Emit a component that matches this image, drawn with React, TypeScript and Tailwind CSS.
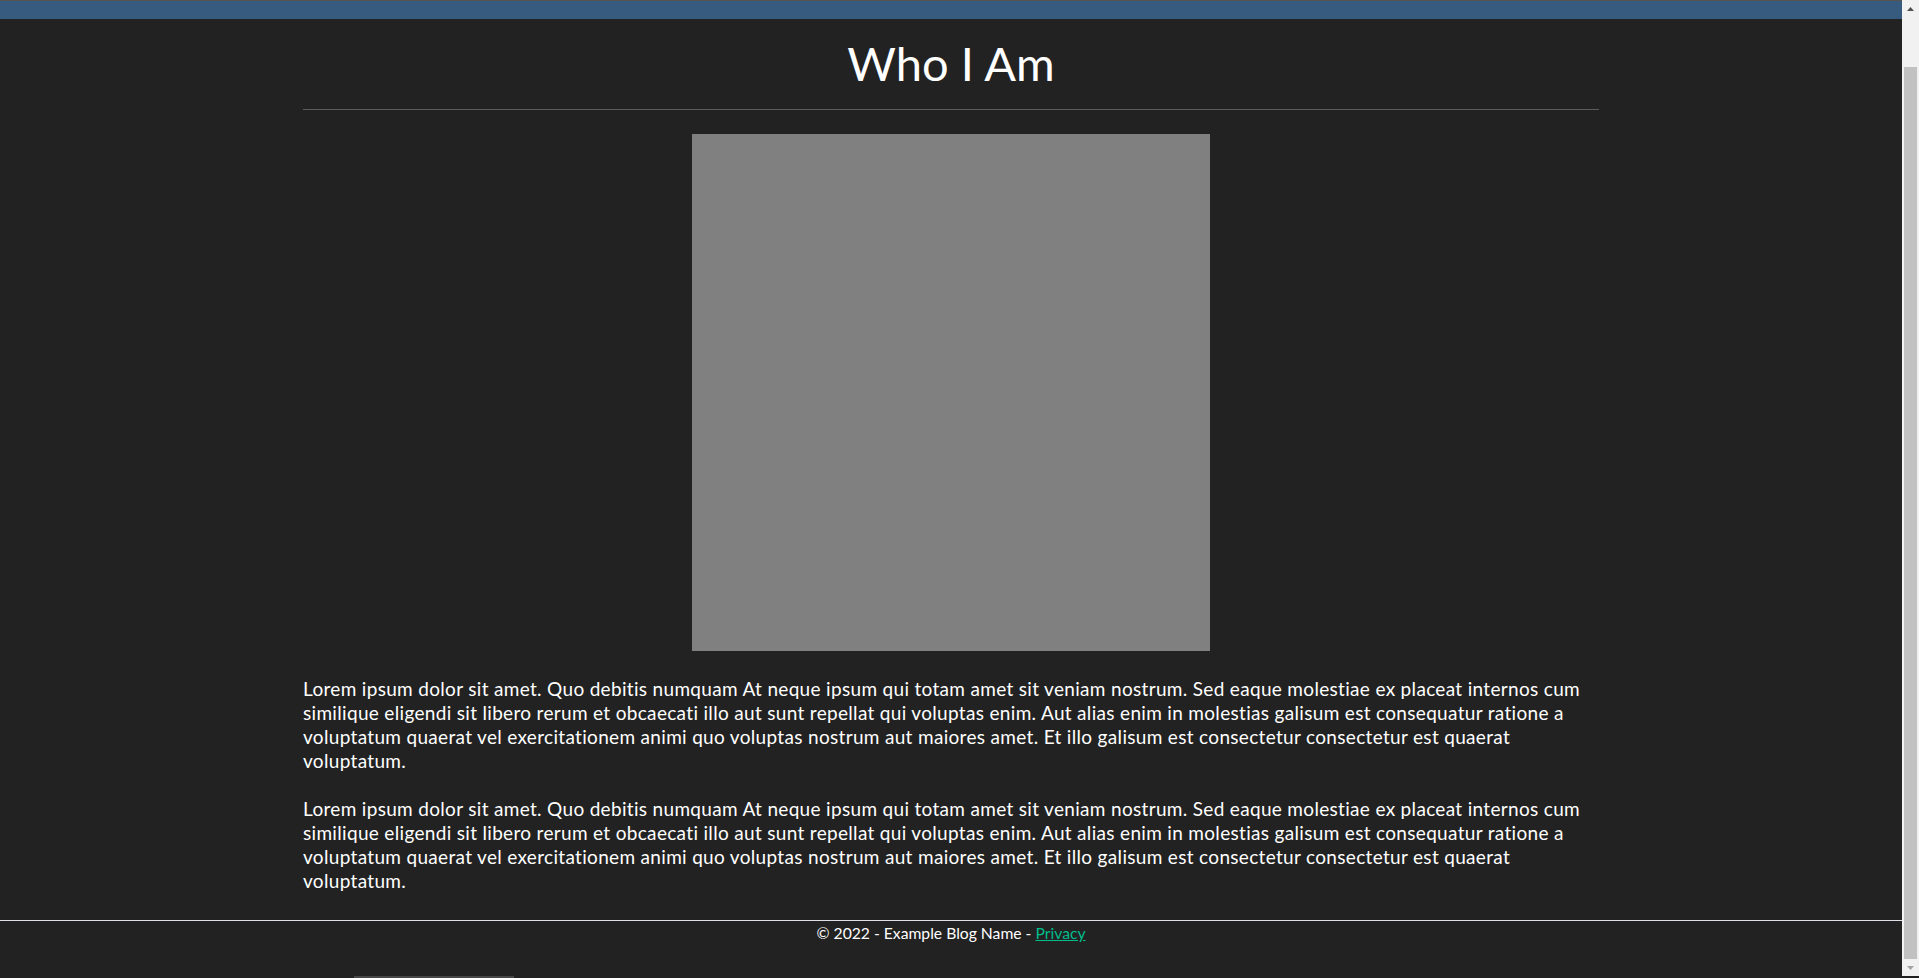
export default function App() {
  const lorem =
    "Lorem ipsum dolor sit amet. Quo debitis numquam At neque ipsum qui totam amet sit veniam nostrum. Sed eaque molestiae ex placeat internos cum similique eligendi sit libero rerum et obcaecati illo aut sunt repellat qui voluptas enim. Aut alias enim in molestias galisum est consequatur ratione a voluptatum quaerat vel exercitationem animi quo voluptas nostrum aut maiores amet. Et illo galisum est consectetur consectetur est quaerat voluptatum.";
  return (
    <div className="h-[978px] w-[1919px] overflow-hidden flex flex-col bg-[#222222] font-['Lato','Liberation_Sans',sans-serif] text-white [font-variant-ligatures:none]">
      <div className="flex h-[976px]">
        <div className="flex-1 flex flex-col min-w-0">
          <div className="h-px bg-[#575452]" />
          <div className="h-[18px] bg-[#375a7f]" />
          <main className="w-[1296px] mx-auto">
            <h1 className="mt-[15px] text-[47px] leading-[58px] text-center font-normal">Who I Am</h1>
            <div className="mt-[17px] h-px bg-[#5c5c5c]" />
            <div className="mt-6 mx-auto w-[518px] h-[517px] bg-[#808080]" />
            <p className="mt-[26px] text-[19px] leading-[24px] tracking-[0.32px]">{lorem}</p>
            <p className="mt-6 text-[19px] leading-[24px] tracking-[0.32px]">{lorem}</p>
          </main>
          <footer className="mt-[27px] border-t border-[#dee2e6] text-center text-[15.7px] leading-[24px]">
            © 2022 - Example Blog Name -{" "}
            <a href="#" className="text-[#00bc8c] underline">Privacy</a>
          </footer>
        </div>
        <div className="w-[17px] bg-[#f1f1f1] flex flex-col">
          <div className="h-[17px] flex items-center justify-center">
            <svg width="7" height="4" viewBox="0 0 7 4"><polygon points="3.5,0 7,4 0,4" fill="#505050" /></svg>
          </div>
          <div className="mt-[50px] mx-[2px] flex-1 bg-[#c1c1c1]" />
          <div className="h-[17px] flex items-center justify-center">
            <svg width="7" height="4" viewBox="0 0 7 4"><polygon points="0,0 7,0 3.5,4" fill="#a3a3a3" /></svg>
          </div>
        </div>
      </div>
      <div className="h-[2px] flex">
        <div className="ml-[354px] w-[160px] h-[2px] bg-[#474747]" />
      </div>
    </div>
  );
}
